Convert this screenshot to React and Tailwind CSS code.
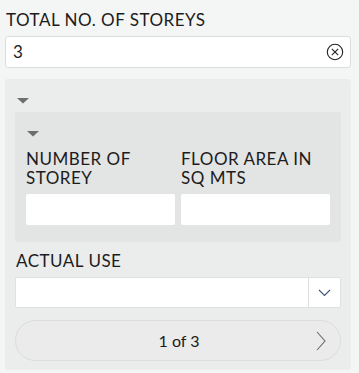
import React from "react";

function Caret() {
  return (
    <svg width="12" height="6" viewBox="0 0 12 6" className="block">
      <polygon points="0,0 12,0 6,5.5" fill="#6e6e6e" />
    </svg>
  );
}

export default function App() {
  return (
    <div
      className="w-[359px] h-[373px] bg-[#f4f5f5] px-[5px] pt-[10px] text-[#1c1c1c] overflow-hidden text-[17px] tracking-[0.5px]"
      style={{ fontFamily: "Lato, 'Noto Sans', sans-serif" }}
    >
      <div className="leading-[20px] pl-[1px]">TOTAL NO. OF STOREYS</div>
      <div className="mt-[6px] h-[32px] w-[346px] bg-white border border-[#dcdcdc] rounded-[3px] flex items-center pl-[7px] pr-[6px]">
        <span className="flex-1 leading-[20px]">3</span>
        <svg width="18" height="18" viewBox="0 0 18 18">
          <circle cx="9" cy="9" r="7.7" fill="none" stroke="#222" strokeWidth="1.1" />
          <line x1="5.8" y1="5.8" x2="12.2" y2="12.2" stroke="#222" strokeWidth="1.1" />
          <line x1="12.2" y1="5.8" x2="5.8" y2="12.2" stroke="#222" strokeWidth="1.1" />
        </svg>
      </div>

      <div className="mt-[11px] w-[346px] h-[291px] bg-[#ebecec] rounded-[3px] px-[10px] pt-[19px]">
        <div className="pl-[2px]">
          <Caret />
        </div>
        <div className="mt-[8px] bg-[#e3e4e4] rounded-[2px] px-[11px] pt-[19px] pb-[17px]">
          <div className="pl-[1px]">
            <Caret />
          </div>
          <div className="mt-[12px] grid grid-cols-2 gap-x-[6px]">
            <div className="flex flex-col">
              <div className="leading-[19px]">NUMBER OF<br />STOREY</div>
              <div className="mt-[7px] h-[31px] bg-white rounded-[2px]"></div>
            </div>
            <div className="flex flex-col">
              <div className="leading-[19px]">FLOOR AREA IN<br />SQ MTS</div>
              <div className="mt-[7px] h-[31px] bg-white rounded-[2px]"></div>
            </div>
          </div>
        </div>

        <div className="mt-[9px] leading-[20px] pl-[1px]">ACTUAL USE</div>
        <div className="mt-[6px] h-[31px] bg-white border border-[#e0e0e0] rounded-[2px] flex">
          <div className="flex-1"></div>
          <div className="w-[32px] border-l border-[#dedede] flex items-center justify-center">
            <svg width="13" height="8" viewBox="0 0 13 8">
              <polyline points="1,1 6.5,6.5 12,1" fill="none" stroke="#3e5477" strokeWidth="1.1" />
            </svg>
          </div>
        </div>

        <div className="mt-[12px] h-[41px] rounded-full border border-[#dcdcdc] bg-[#ebebeb] relative flex items-center justify-center">
          <span className="text-[16px] tracking-normal pl-[2px]">1 of 3</span>
          <svg width="10" height="20" viewBox="0 0 10 20" className="absolute right-[14px] top-[10px]">
            <polyline points="1,1 9,10 1,19" fill="none" stroke="#6a6a6a" strokeWidth="1.1" />
          </svg>
        </div>
      </div>
    </div>
  );
}
